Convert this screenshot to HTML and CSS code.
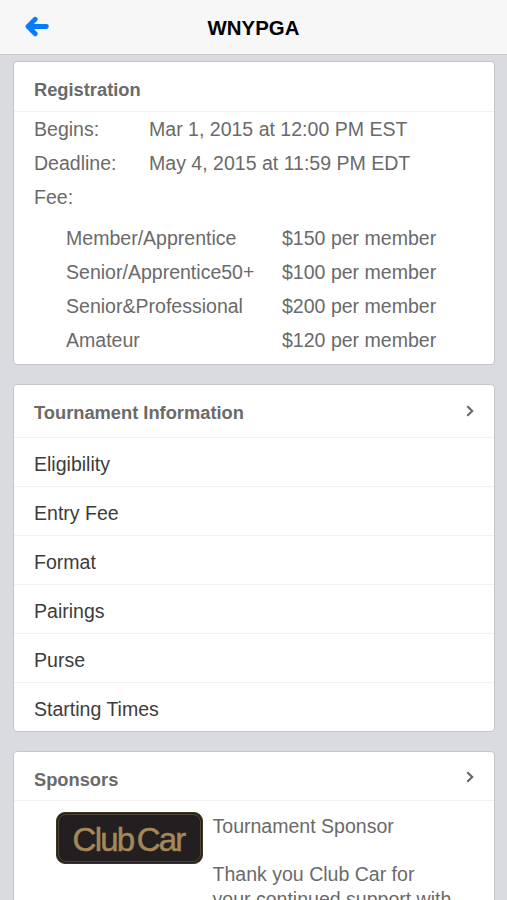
FILE: index.html
```
<!DOCTYPE html>
<html lang="en">
<head>
    <meta charset="utf-8">
    <title>WNYPGA</title>
    <link rel="stylesheet" href="styles.css">
</head>
<body>
    <header class="navbar">
        <a class="back" href="#" aria-label="Back">
            <svg width="26" height="22" viewBox="0 0 26 22">
                <path d="M11.2 3.3 L4 10.5 L11.2 17.7 M5 10.5 H22.4" />
                <path class="fill" d="M3 10.5 L10.5 4 L9.5 10.5 L10.5 17 Z" />
            </svg>
        </a>
        <h1>WNYPGA</h1>
    </header>

    <main>
        <section class="card registration">
            <h2>Registration</h2>
            <dl class="dates">
                <dt>Begins:</dt><dd>Mar 1, 2015 at 12:00 PM EST</dd>
                <dt>Deadline:</dt><dd>May 4, 2015 at 11:59 PM EDT</dd>
                <dt>Fee:</dt><dd></dd>
            </dl>
            <dl class="fees">
                <dt>Member/Apprentice</dt><dd>$150 per member</dd>
                <dt>Senior/Apprentice50+</dt><dd>$100 per member</dd>
                <dt>Senior&amp;Professional</dt><dd>$200 per member</dd>
                <dt>Amateur</dt><dd>$120 per member</dd>
            </dl>
        </section>

        <section class="card info">
            <h2>Tournament Information
                <svg class="chevron" width="8" height="12" viewBox="0 0 8 12"><path d="M1.3 1.2 L6.2 6 L1.3 10.8" /></svg>
            </h2>
            <ul>
                <li>Eligibility</li>
                <li>Entry Fee</li>
                <li>Format</li>
                <li>Pairings</li>
                <li>Purse</li>
                <li>Starting Times</li>
            </ul>
        </section>

        <section class="card sponsors">
            <h2>Sponsors
                <svg class="chevron" width="8" height="12" viewBox="0 0 8 12"><path d="M1.3 1.2 L6.2 6 L1.3 10.8" /></svg>
            </h2>
            <div class="sponsor">
                <div class="logo"><span>Club Car</span></div>
                <div class="sponsor-text">
                    <p>Tournament Sponsor</p>
                    <p>Thank you Club Car for<br>your continued support with</p>
                </div>
            </div>
        </section>
    </main>
</body>
</html>
```

FILE: styles.css
```
* { box-sizing: border-box; }
html, body { height: 100%; }
body {
    display: flex;
    flex-direction: column;
    margin: 0;
    overflow: hidden;
    background: #dadbe0;
    font-family: "Liberation Sans", Arial, sans-serif;
    font-size: 19.55px;
    color: #6a6a6a;
}
h1, h2, dl, dd, ul, p { margin: 0; padding: 0; }

.navbar {
    display: grid;
    grid-template-columns: 60px 1fr 60px;
    align-items: center;
    flex: none;
    height: 55px;
    background: #f7f7f7;
    border-bottom: 1px solid #c9c9ce;
}
.navbar h1 {
    padding-top: 2px;
    font-size: 20.4px;
    line-height: 24px;
    text-align: center;
    color: #000;
}
.back { padding-left: 24px; height: 22px; }
.back svg { display: block; }
.back path {
    fill: none;
    stroke: #087dfb;
    stroke-width: 4.8;
    stroke-linecap: round;
    stroke-linejoin: round;
}
.back .fill { fill: #087dfb; stroke: none; }

main {
    flex: 1;
    min-height: 0;
    overflow: hidden;
    padding: 6px 12px 0 13px;
}
.card {
    background: #fff;
    border: 1px solid #c4c5c9;
    border-radius: 4px;
    margin-bottom: 19px;
}
.card h2 {
    display: flex;
    justify-content: space-between;
    align-items: center;
    height: 50px;
    padding: 6px 20px 0;
    border-bottom: 1px solid #f2f2f3;
    font-size: 18.3px;
}
.chevron {
    fill: none;
    stroke: #666;
    stroke-width: 2.1;
    margin-top: -4px;
}

.registration { height: 304px; }
.dates, .fees {
    display: grid;
    grid-auto-rows: 34.15px;
    line-height: 34px;
}
.dates { grid-template-columns: 115px 1fr; padding-left: 20px; }
.fees { grid-template-columns: 216px 1fr; padding: 6.5px 0 0 52px; }

.info { height: 348px; }
.info h2 { height: 53px; padding-top: 3px; }
.info .chevron { margin-top: -3px; }
.info ul { list-style: none; color: #3c3c3c; }
.info li {
    height: 49.1px;
    padding-left: 20px;
    line-height: 53px;
    border-bottom: 1px solid #f2f2f3;
}
.info li:last-child { height: 46px; border: 0; }

.sponsors { height: 400px; }
.sponsors h2 { height: 49px; padding-top: 8px; }
.sponsors .chevron { margin-top: -6px; }
.sponsor {
    display: flex;
    gap: 9.5px;
    padding: 11px 0 0 42px;
}
.logo {
    width: 147px;
    height: 52px;
    padding: 1px;
    background: #231f20;
    border: 1px solid #3b3529;
    border-radius: 9px;
}
.logo span {
    display: block;
    height: 48px;
    border: 1px solid #50462f;
    border-radius: 8px;
    font-size: 33px;
    line-height: 49px;
    letter-spacing: -1.8px;
    word-spacing: -4px;
    text-indent: -2px;
    text-align: center;
    color: #a4875a;
    -webkit-text-stroke: .5px #a4875a;
}
.sponsor-text { line-height: 24.5px; padding-top: 1.5px; }
.sponsor-text p { margin-bottom: 24px; }
```
